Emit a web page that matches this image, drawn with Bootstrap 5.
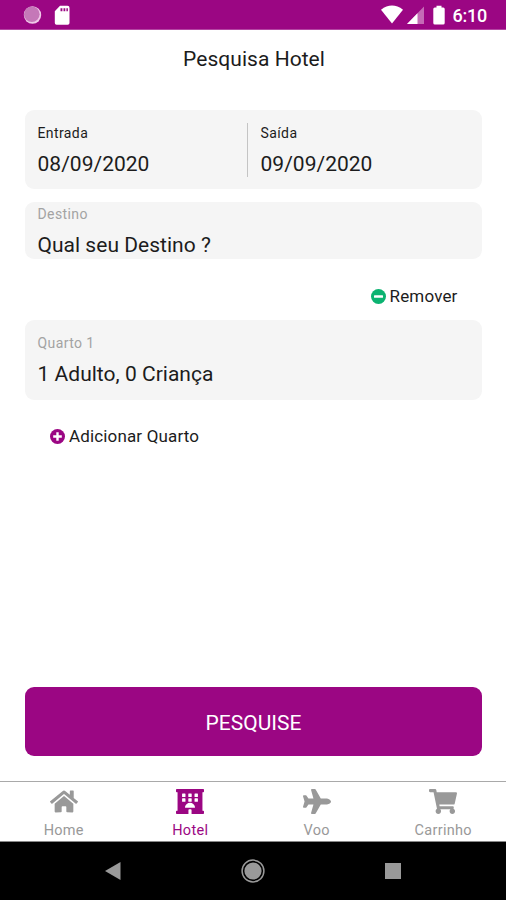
<!DOCTYPE html>
<html lang="pt-BR">
<head>
<meta charset="utf-8">
<meta name="viewport" content="width=device-width, initial-scale=1">
<title>Pesquisa Hotel</title>
<link href="https://cdn.jsdelivr.net/npm/bootstrap@5.3.0/dist/css/bootstrap.min.css" rel="stylesheet">
<style>
  :root { --brand: #9b0683; --soft: #f5f5f5; --idle: #999; }
  body { font-family: Roboto, "Liberation Sans", sans-serif; color: #1c1c1c; }
  svg { display: block; flex: none; }
  .screen { height: 900px; overflow: hidden; }
  .status { height: 30px; background: var(--brand); border-bottom: 1px solid #b445a3; padding: 0 19px 0 23px; }
  .battery { margin-left: 9px; }
  .clock { font-size: 18px; font-weight: 500; line-height: 30px; letter-spacing: -.25px; margin-left: 8px; padding-top: 2px; }
  .title { font-size: 21px; line-height: 28px; margin-top: 15px; letter-spacing: .04px; font-weight: 400; padding-left: 2px; }
  .content { padding: 37px 24px 25px 25px; }
  .field { background: var(--soft); border-radius: 9px; padding: 0 12.5px; }
  .dates { height: 79px; padding-top: 13px; padding-bottom: 12px; }
  .depart { width: 209.5px; }
  .arrive { border-left: 1px solid #c4c4c4; padding-left: 12.5px; }
  .place { height: 57px; margin-top: 13px; padding-top: 2px; }
  .room { height: 80px; margin-top: 12px; padding-top: 13px; }
  .caption-text { font-size: 14px; line-height: 20px; letter-spacing: .4px; }
  .muted { color: #a3a3a3; }
  .value { font-size: 21px; line-height: 28px; margin-top: 7px; letter-spacing: .02px; white-space: nowrap; }
  .action { font-size: 17px; line-height: 24px; gap: 4px; letter-spacing: .15px; }
  .remove { margin-top: 25px; padding-right: 24.5px; }
  .add { margin-top: 24px; padding-left: 25px; }
  .btn-search { height: 69px; background: var(--brand); border-radius: 9px; font-size: 21px; color: #fff; border: 0; padding-top: 10px; }
  .btn-search:hover { background: var(--brand); color: #fff; }
  .tabs { height: 61px; border-top: 1px solid #a9a9a9; border-bottom: 1px solid #888; }
  .tab { color: var(--idle); font-size: 14.5px; line-height: 20px; padding-top: 6.5px; padding-left: 1px; gap: 7.5px; letter-spacing: .3px; }
  .tab.current { color: var(--brand); }
  .system { height: 58px; background: #000; padding: 0 43px; }
</style>
</head>
<body>
<div class="screen d-flex flex-column bg-white">
  <header class="status d-flex align-items-center text-white flex-shrink-0">
    <svg width="20" height="20" viewBox="0 0 20 20"><circle cx="9.5" cy="10" r="8.7" fill="#efc8e8"/><circle cx="8.8" cy="9.2" r="7.8" fill="#c578b8"/></svg>
    <svg class="ms-2 me-auto" width="24" height="20" viewBox="0 0 24 20"><path fill="#fff" fill-rule="evenodd" d="M9 .8h7.5q2 0 2 2V18q0 1.8-1.8 1.8H5.600q-1.800 0-1.800-1.800V6.300zM9.500 3.200v3h1.900v-3zm3 0v3h1.800v-3zm2.900 0v3h1.500v-3z"/></svg>
    <svg width="22" height="19" viewBox="0 0 22 19"><path fill="#fff" d="M0 4.800Q11-3.600 22 4.800L11 18.500z"/></svg>
    <svg class="ms-1" width="17" height="18" viewBox="0 0 17 18"><path fill="#c56bb6" d="M17 .500V18H0z"/><path fill="#fff" d="M10.500 7.200V18H0z"/></svg>
    <svg class="battery" width="12" height="20" viewBox="0 0 12 20"><path fill="#fff" d="M3.500 .8h5v1.700h1.800Q11.700 2.500 11.700 4v14q0 1.600-1.600 1.600H1.900Q.3 19.600.3 18V4Q.3 2.500 1.800 2.500h1.700z"/></svg>
    <span class="clock">6:10</span>
  </header>

  <h1 class="title text-center mb-0">Pesquisa Hotel</h1>

  <main class="content d-flex flex-column flex-grow-1">
    <section class="field dates d-flex">
      <div class="depart">
        <div class="caption-text">Entrada</div>
        <div class="value">08/09/2020</div>
      </div>
      <div class="arrive flex-grow-1">
        <div class="caption-text">Saída</div>
        <div class="value">09/09/2020</div>
      </div>
    </section>
    <section class="field place">
      <div class="caption-text muted">Destino</div>
      <div class="value">Qual seu Destino ?</div>
    </section>
    <div class="action remove d-flex align-items-center justify-content-end">
      <svg width="15" height="15" viewBox="0 0 15 15"><circle cx="7.500" cy="7.500" r="7.500" fill="#0bb371"/><rect x="3" y="6.300" width="9" height="2.400" rx=".5" fill="#fff"/></svg>
      <span>Remover</span>
    </div>
    <section class="field room">
      <div class="caption-text muted">Quarto 1</div>
      <div class="value">1 Adulto, 0 Criança</div>
    </section>
    <div class="action add d-flex align-items-center">
      <svg width="15" height="15" viewBox="0 0 15 15"><circle cx="7.500" cy="7.500" r="7.500" fill="#9b0683"/><path fill="#fff" d="M6.300 3.200h2.400v3.100h3.100v2.400H8.700v3.100H6.300V8.700H3.200V6.300h3.100z"/></svg>
      <span>Adicionar Quarto</span>
    </div>
    <button type="button" class="btn btn-search w-100 mt-auto">PESQUISE</button>
  </main>

  <nav class="tabs row g-0 flex-shrink-0">
    <div class="tab col-3 d-flex flex-column align-items-center">
      <svg width="28" height="25" viewBox="0 0 576 512" fill="currentColor"><path d="M280.37 148.26L96 300.11V464a16 16 0 0 0 16 16l112.06-.29a16 16 0 0 0 15.92-16V368a16 16 0 0 1 16-16h64a16 16 0 0 1 16 16v95.640a16 16 0 0 0 16 16.050L464 480a16 16 0 0 0 16-16V300L295.670 148.260a12.190 12.190 0 0 0-15.300 0zM571.600 251.470L488 182.560V44.050a12 12 0 0 0-12-12h-56a12 12 0 0 0-12 12v72.610L318.470 43a48 48 0 0 0-61 0L4.340 251.470a12 12 0 0 0-1.600 16.900l25.500 31A12 12 0 0 0 45.150 301l235.220-193.740a12.190 12.190 0 0 1 15.300 0L530.900 301a12 12 0 0 0 16.900-1.600l25.500-31a12 12 0 0 0-1.700-16.930z"/></svg>
      <span>Home</span>
    </div>
    <div class="tab current col-3 d-flex flex-column align-items-center">
      <svg width="28" height="25" viewBox="0 0 576 512" fill="currentColor"><path fill-rule="evenodd" d="M560 64c8.840 0 16-7.160 16-16V16c0-8.840-7.160-16-16-16H16C7.160 0 0 7.160 0 16v32c0 8.840 7.160 16 16 16h16v384H16c-8.840 0-16 7.160-16 16v32c0 8.840 7.160 16 16 16h240v-80c0-8.800 7.200-16 16-16h32c8.800 0 16 7.200 16 16v80h240c8.840 0 16-7.160 16-16v-32c0-8.840-7.160-16-16-16h-16V64zM136 92h48q11 0 11 11v50q0 11-11 11h-48q-11 0-11-11v-50q0-11 11-11zM264 92h48q11 0 11 11v50q0 11-11 11h-48q-11 0-11-11v-50q0-11 11-11zM392 92h48q11 0 11 11v50q0 11-11 11h-48q-11 0-11-11v-50q0-11 11-11zM136 190h48q11 0 11 11v50q0 11-11 11h-48q-11 0-11-11v-50q0-11 11-11zM264 190h48q11 0 11 11v50q0 11-11 11h-48q-11 0-11-11v-50q0-11 11-11zM392 190h48q11 0 11 11v50q0 11-11 11h-48q-11 0-11-11v-50q0-11 11-11zM202 386q-20 0-17-19c10-48 53-83 103-83s93 35 103 83q3 19-17 19z"/></svg>
      <span>Hotel</span>
    </div>
    <div class="tab col-3 d-flex flex-column align-items-center">
      <svg width="28" height="25" viewBox="0 0 576 512" fill="currentColor"><path d="M480 192H365.710L260.610 8.060A16 16 0 0 0 246.710 0h-65.500c-10.630 0-18.300 10.170-15.380 20.390L214.860 192H112l-43.200-57.600c-3-4-7.800-6.400-12.800-6.400H16C5.600 128-2 137.780.5 147.880L32 256 .5 364.120C-2 374.220 5.600 384 16 384h40c5 0 9.800-2.370 12.800-6.400L112 320h102.860l-49 171.600c-2.900 10.220 4.750 20.400 15.380 20.400h65.500c5.700 0 11-3.080 13.900-8.060L365.710 320H480c35.350 0 96-28.650 96-64s-60.650-64-96-64z"/></svg>
      <span>Voo</span>
    </div>
    <div class="tab col-3 d-flex flex-column align-items-center">
      <svg width="28" height="25" viewBox="0 0 576 512" fill="currentColor"><path d="M528.120 301.319l47.273-208C578.806 78.301 567.391 64 551.990 64H159.208l-9.166-44.810C147.758 8.021 137.930 0 126.529 0H24C10.745 0 0 10.745 0 24v16c0 13.255 10.745 24 24 24h69.883l70.248 343.435C147.325 417.100 136 435.222 136 456c0 30.928 25.072 56 56 56s56-25.072 56-56c0-15.674-6.447-29.835-16.824-40h209.647C430.447 426.165 424 440.326 424 456c0 30.928 25.072 56 56 56s56-25.072 56-56c0-22.172-12.888-41.332-31.579-50.405l5.517-24.276c3.413-15.018-8.002-29.319-23.403-29.319H218.117l-6.545-32h293.145c11.206 0 20.920-7.754 23.403-18.681z"/></svg>
      <span>Carrinho</span>
    </div>
  </nav>

  <footer class="system row g-0 align-items-center flex-shrink-0">
    <div class="col-4 d-flex justify-content-center"><svg width="16" height="18" viewBox="0 0 16 18"><path fill="#999" d="M0 9L15.500 0v18z"/></svg></div>
    <div class="col-4 d-flex justify-content-center"><svg width="24" height="24" viewBox="0 0 24 24"><circle cx="12" cy="12" r="10.900" fill="none" stroke="#999" stroke-width="1.500"/><circle cx="12" cy="12" r="8.600" fill="#999"/></svg></div>
    <div class="col-4 d-flex justify-content-center"><svg width="16" height="16" viewBox="0 0 16 16"><rect width="16" height="16" fill="#999"/></svg></div>
  </footer>
</div>
<script src="https://cdn.jsdelivr.net/npm/bootstrap@5.3.0/dist/js/bootstrap.bundle.min.js"></script>
</body>
</html>
